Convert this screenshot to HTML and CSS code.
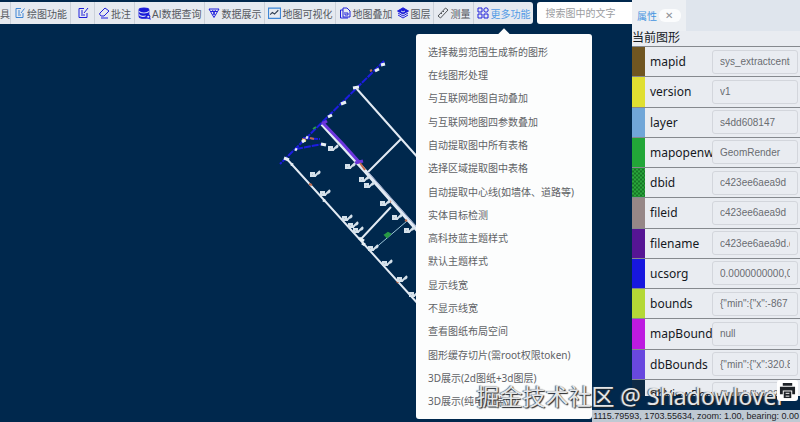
FILE: index.html
```html
<!DOCTYPE html>
<html lang="zh-CN">
<head>
<meta charset="utf-8">
<title>地图图形查看</title>
<link rel="stylesheet" href="styles.css">
</head>
<body>
<main class="app">
  <svg class="map" viewBox="0 0 800 422" preserveAspectRatio="xMinYMin slice" aria-hidden="true">
    <defs>
      <g id="tag"><path d="M-4-2h3v3h-3zM-1 1h2M0 1l5-5M3-1l2-2" /></g>
    </defs>
    <g class="roads">
      <path d="M356 88L420 160M401 139L368 172M286 158L420 306M391 207L361 239"/>
      <path class="thin" d="M407 221L373 250"/>
      <path class="wide" d="M322 124L366 172L420 233"/>
      <path class="seam" d="M368 172L420 231"/>
    </g>
    <g class="pipes">
      <path d="M384 61L280 164M296 149L323 144M303 138L320 139"/>
      <path class="violet" d="M322 122L343 144L360 163M322 124l5-3M355 163l8-2"/>
      <path class="orange" d="M360 163l5 7M302 139l4 1M310 138l4 1M370 71l2-1M309 184l3 1M389 201l2 1M405 220l2 1M397 281l1 2"/>
      <path class="yellow" d="M302 140l4 1"/>
      <path class="green" d="M385 235l3-2 2 1-3 3zM313 129l3-2"/>
    </g>
    <g class="ticks">
      <path d="M381 65l4-1M375 71l4-2M341 104l5-2M328 117l4-2M353 88l6-1M302 142l3-2M306 137l2 1M321 144l5 1M284 158l5 2M291 164l2 1M295 149l2 1M359 238l5 3M362 243l3 2M323 200l2 1"/>
    </g>
    <g class="tags">
      <use href="#tag" x="333" y="149"/><use href="#tag" x="350" y="167"/>
      <use href="#tag" x="315" y="175"/><use href="#tag" x="325" y="194"/>
      <use href="#tag" x="364" y="180"/><use href="#tag" x="369" y="186"/>
      <use href="#tag" x="347" y="219"/><use href="#tag" x="353" y="226"/>
      <use href="#tag" x="358" y="231"/><use href="#tag" x="385" y="204"/>
      <use href="#tag" x="397" y="218"/><use href="#tag" x="409" y="231"/>
      <use href="#tag" x="373" y="249"/><use href="#tag" x="387" y="264"/>
      <use href="#tag" x="402" y="280"/><use href="#tag" x="414" y="295"/>
    </g>
  </svg>

  <header class="toolbar">
    <nav class="tools">
      <button class="tool tool-cut">具</button>
      <button class="tool"><svg class="icon sky" viewBox="0 0 12 12"><path d="M7 1.500H2v9h7V6M4 4h2M4 6h2M4 8h3M10.500 1.500L7 6"/></svg>绘图功能</button>
      <button class="tool tool-icon" aria-label="编辑"><svg class="icon" viewBox="0 0 12 12"><path d="M7 1.500H2v9h8V6M4 4h2M4 6h2M4 8h4M11 1L7 6"/></svg></button>
      <button class="tool"><svg class="icon" viewBox="0 0 12 12"><path d="M2 6l5-5 4 3-5 5H3L1.500 7zM3 11h7"/></svg>批注</button>
      <button class="tool"><svg class="icon big" viewBox="0 0 12 12"><path class="solid" d="M1 2.500C1 .5 10 .5 10 2.500v6C10 11 1 11 1 8.500z"/><path class="light" d="M1 4c1 2 8 2 9 0M1 7c1 2 5 2 6 1"/><circle cx="9.500" cy="9" r="1.500" fill="#e6eaf0"/><path d="M10.500 10l1 1.500"/></svg>AI数据查询</button>
      <button class="tool"><svg class="icon" viewBox="0 0 12 12"><path d="M1 2h10L6 10.500zM3 4.500h6M4.500 3L7 8M7.500 3L5 8"/></svg>数据展示</button>
      <button class="tool"><svg class="icon big sky" viewBox="0 0 12 12"><path d="M.5 1h11v9.500H.5z"/><path class="dark" d="M2 7l2-2 2 1.500L9.500 3"/></svg>地图可视化</button>
      <button class="tool tool-open"><svg class="icon" viewBox="0 0 12 12"><path d="M4 1h4l3 3v6H4zM4 3H1.500v8H9M6 5v3h3V6H7"/></svg>地图叠加</button>
      <button class="tool"><svg class="icon" viewBox="0 0 12 12"><path class="solid" d="M6 .8L11.500 4 6 7 .5 4z"/><path d="M1 6l5 3 5-3M1 8l5 3 5-3"/><path class="light" d="M4 4l2 1 2-1"/></svg>图层</button>
      <button class="tool"><svg class="icon gray" viewBox="0 0 12 12"><path d="M1 9l7.500-8L11 3l-7.500 8zM4 6l1 1M6 4l1 1"/></svg>测量</button>
      <button class="tool active" aria-expanded="true"><svg class="icon" viewBox="0 0 12 12"><path d="M1 1h4v4H1zM1 7h4v4H1zM7 7h4v4H7z"/><circle cx="9" cy="3" r="2.200"/></svg>更多功能</button>
    </nav>
    <input class="search" type="text" aria-label="搜索" placeholder="搜索图中的文字">
  </header>

  <ul class="menu">
    <li><a href="#">选择裁剪范围生成新的图形</a></li>
    <li><a href="#">在线图形处理</a></li>
    <li><a href="#">与互联网地图自动叠加</a></li>
    <li><a href="#">与互联网地图四参数叠加</a></li>
    <li><a href="#">自动提取图中所有表格</a></li>
    <li><a href="#">选择区域提取图中表格</a></li>
    <li><a href="#">自动提取中心线(如墙体、道路等)</a></li>
    <li><a href="#">实体目标检测</a></li>
    <li><a href="#">高科技蓝主题样式</a></li>
    <li><a href="#">默认主题样式</a></li>
    <li><a href="#">显示线宽</a></li>
    <li><a href="#">不显示线宽</a></li>
    <li><a href="#">查看图纸布局空间</a></li>
    <li><a href="#">图形缓存切片(需root权限token)</a></li>
    <li><a href="#">3D展示(2d图纸+3d图层)</a></li>
    <li><a href="#">3D展示(纯电脑端)</a></li>
  </ul>

  <aside class="panel">
    <div class="tabs"><button class="tab">属性 <span class="close">✕</span></button></div>
    <h2 class="title">当前图形</h2>
    <table class="props">
      <tr><td class="swatch brown"></td><th><label for="p1">mapid</label></th><td><input id="p1" value="sys_extractcenterline"></td></tr>
      <tr><td class="swatch lemon"></td><th><label for="p2">version</label></th><td><input id="p2" value="v1"></td></tr>
      <tr><td class="swatch azure"></td><th><label for="p3">layer</label></th><td><input id="p3" value="s4dd608147"></td></tr>
      <tr><td class="swatch leaf"></td><th><label for="p4">mapopenw</label></th><td><input id="p4" value="GeomRender"></td></tr>
      <tr><td class="swatch leaf dots"></td><th><label for="p5">dbid</label></th><td><input id="p5" value="c423ee6aea9d"></td></tr>
      <tr><td class="swatch taupe"></td><th><label for="p6">fileid</label></th><td><input id="p6" value="c423ee6aea9d"></td></tr>
      <tr><td class="swatch purple"></td><th><label for="p7">filename</label></th><td><input id="p7" value="c423ee6aea9d.dwg"></td></tr>
      <tr><td class="swatch blue"></td><th><label for="p8">ucsorg</label></th><td><input id="p8" value="0.0000000000,0.0"></td></tr>
      <tr><td class="swatch lime"></td><th><label for="p9">bounds</label></th><td><input id="p9" value="{&quot;min&quot;:{&quot;x&quot;:-867"></td></tr>
      <tr><td class="swatch magenta"></td><th><label for="p10">mapBound</label></th><td><input id="p10" value="null"></td></tr>
      <tr><td class="swatch indigo"></td><th><label for="p11">dbBounds</label></th><td><input id="p11" value="{&quot;min&quot;:{&quot;x&quot;:320.8"></td></tr>
      <tr><td class="swatch navy"></td><th><label for="p12">dbViewBou</label></th><td><input id="p12" value="{&quot;min&quot;:{&quot;x&quot;:320.8"></td></tr>
    </table>
  </aside>

  <output class="status">1115.79593, 1703.55634, zoom: 1.00, bearing: 0.00</output>
  <div class="credit">掘金技术社区 @ Shadowlover</div>
  <button class="print" aria-label="打印"><svg viewBox="0 0 18 18"><path d="M4 1h10v3H4zM1 5h16v8h-3V9H4v4H1z"/><path d="M5 10h8v7H5z"/><path class="paper" d="M7 12h4M7 15h4"/></svg></button>
</main>
</body>
</html>
```
FILE: styles.css
```css
* { box-sizing: border-box; }
body { margin: 0; background: #00284d; font-family: "Liberation Sans", "Noto Sans CJK SC", sans-serif; }
button, input { font: inherit; }
.app { position: relative; height: 100vh; overflow: hidden; font-size: 10px; color: #606266; }
.map { position: absolute; inset: 0; width: 100%; height: 100%; fill: none; stroke-width: 2; }
.roads { stroke: #e2eaf3; }
.roads .thin { stroke: #9cc4d8; stroke-width: 1; }
.roads .wide { stroke-width: 4; }
.roads .seam { stroke: #8f9fc4; stroke-width: 1; }
.pipes { stroke: #1c1ce0; stroke-width: 1; }
.pipes path:first-child { stroke-width: 2; stroke-dasharray: 7 1; }
.pipes .violet { stroke: #6c35dc; stroke-width: 3; }
.pipes .orange { stroke: #c26b4c; stroke-width: 2; }
.pipes .yellow { stroke: #e6d640; stroke-width: 2; }
.pipes .green { stroke: #289b45; stroke-width: 2; fill: #289b45; }
.ticks { stroke: #e8f0f5; stroke-width: 3; }
.tags { stroke: #d5e1ea; stroke-width: 2; fill: #b4c4d2; }

.toolbar { position: relative; display: flex; gap: 4px; padding-top: 2px; }
.tools { display: flex; height: 22px; background: #e6eaf0; border-radius: 0 3px 3px 0; }
.tool { display: flex; align-items: center; gap: 1px; padding: 0 3px; border: 0; border-right: 1px solid #cbd1d9; background: none; color: #55595f; white-space: nowrap; }
.tool-cut { width: 11px; padding: 0; justify-content: flex-end; }
.tool-icon { width: 24px; justify-content: center; }
.tool-open { border-right: 0; padding-right: 2px; }
.active { color: #529be6; border-right: 0; }
.icon { width: 12px; height: 12px; flex: none; fill: none; stroke: #2020dc; stroke-width: 1; }
.icon.big { width: 13px; height: 13px; }
.icon.sky { stroke: #3e86d6; }
.icon.gray { stroke: #505458; }
.icon .solid { fill: #1a1ad8; }
.icon .light { stroke: #cfd8f4; }
.icon .dark { stroke: #2c3c50; }
.search { width: 110px; height: 22px; padding: 0 8px; border: 0; border-radius: 3px; background: #fff; }
.search::placeholder { color: #9b9da1; }

.menu { position: absolute; top: 34px; bottom: 3px; left: 416px; display: flex; flex-direction: column; width: 176px; margin: 0; padding: 6px 12px; list-style: none; background: #fcfdfd; border-radius: 3px; font-family: "Noto Sans", "Noto Sans CJK SC", sans-serif; }
.menu::before { content: ""; position: absolute; top: -4px; left: 84px; width: 8px; height: 8px; background: #fcfdfd; transform: rotate(45deg); }
.menu li { flex: 1; display: flex; align-items: center; }
.menu a { color: #606266; line-height: 14px; text-decoration: none; white-space: nowrap; }

.panel { position: absolute; top: 0; right: 0; bottom: 26px; width: 168px; overflow: hidden; background: #e9ecf1; color: #15191e; }
.tabs { display: flex; height: 31px; background: #dfe5ed; }
.tab { display: flex; align-items: center; gap: 2px; width: 54px; padding: 0 0 0 5px; border: 0; background: #eceff3; color: #4594e0; }
.close { padding: 1px 8px 1px 6px; border-radius: 6px; background: #fbfcfd; color: #8d9196; }
.title { height: 15px; margin: 0; font-size: 12px; font-weight: 400; line-height: 15px; }
.props { width: 100%; height: 86vh; table-layout: fixed; border-collapse: collapse; }
.props tr { border-top: 1px solid #85898e; }
.props td, .props th { padding: 0; }
.props th { width: 67px; padding-left: 5px; overflow: hidden; font: 400 12px "Noto Sans", sans-serif; text-align: left; white-space: nowrap; }
.props td:last-child { padding-right: 2px; }
.props input { display: block; width: 100%; height: 24px; padding: 0 7px; border: 1px solid #d3d6dc; border-radius: 3px; background: #e9ecf1; color: #6a6d72; }
.swatch { width: 13px; }
.brown { background: #705621; }
.lemon { background: #e0df31; }
.azure { background: #70a6d8; }
.leaf { background: #22a638; }
.dots { background-image: repeating-conic-gradient(#167526 0 25%, #2aa63c 0 50%); background-size: 4px 4px; }
.taupe { background: #968787; }
.purple { background: #561594; }
.blue { background: #1717df; }
.lime { background: #b4d836; }
.magenta { background: #bd1ae0; }
.indigo { background: #6848df; }
.navy { background: #0e2a45; }

.print { position: absolute; right: 2px; bottom: 21px; width: 21px; height: 21px; padding: 2px; border: 0; border-radius: 3px; background: #fff; }
.print svg { display: block; width: 17px; height: 17px; fill: #1e2227; }
.print .paper { stroke: #fff; }
.status { position: absolute; right: 0; bottom: 0; padding: 0 1px; background: #bfc9d3; color: #1c2126; font-size: 9px; line-height: 12px; white-space: nowrap; }
.credit { position: absolute; right: 14px; bottom: 11px; color: #e4e6e8; font: 23px/30px "Noto Sans", "Noto Sans CJK SC", sans-serif; text-shadow: 1px 1px 1px #202428, -1px 0 1px #55595d; white-space: nowrap; pointer-events: none; }
```
